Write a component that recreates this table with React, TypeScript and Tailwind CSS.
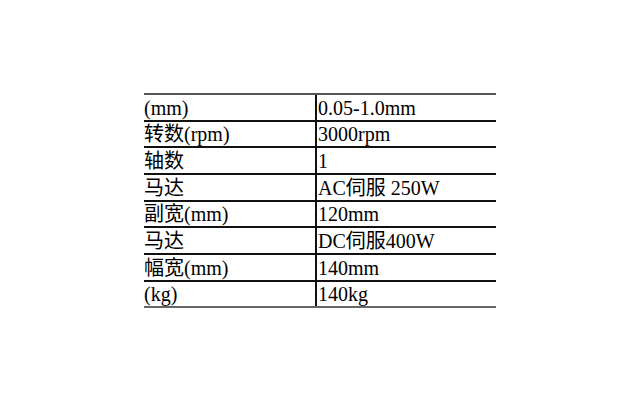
const rows: { label: string; value: string; h: string }[] = [
  { label: "(mm)", value: "0.05-1.0mm", h: "h-[25px]" },
  { label: "转数(rpm)", value: "3000rpm", h: "h-[24px]" },
  { label: "轴数", value: "1", h: "h-[25px]" },
  { label: "马达", value: "AC伺服 250W", h: "h-[25px]" },
  { label: "副宽(mm)", value: "120mm", h: "h-[24px]" },
  { label: "马达", value: "DC伺服400W", h: "h-[25px]" },
  { label: "幅宽(mm)", value: "140mm", h: "h-[25px]" },
  { label: "(kg)", value: "140kg", h: "h-[24px]" },
]

export default function App() {
  return (
    <div className="w-[640px] h-[400px] bg-white pt-[93px] pl-[144px] font-['Liberation_Serif','Noto_Sans_CJK_SC',serif] text-[20px] text-black">
      <div className="w-[352px] border-t-2 border-[#555]">
        {rows.map((r, i) => (
          <div
            key={i}
            className={`flex border-b-2 ${i === rows.length - 1 ? "border-[#666]" : "border-[#111]"}`}
          >
            <div className={`w-[171px] ${r.h} flex items-center leading-none whitespace-nowrap`}>
              {r.label}
            </div>
            <div className={`flex-1 ${r.h} flex items-center pl-[1px] border-l-2 border-[#111] leading-none whitespace-nowrap`}>
              {r.value}
            </div>
          </div>
        ))}
      </div>
    </div>
  )
}
